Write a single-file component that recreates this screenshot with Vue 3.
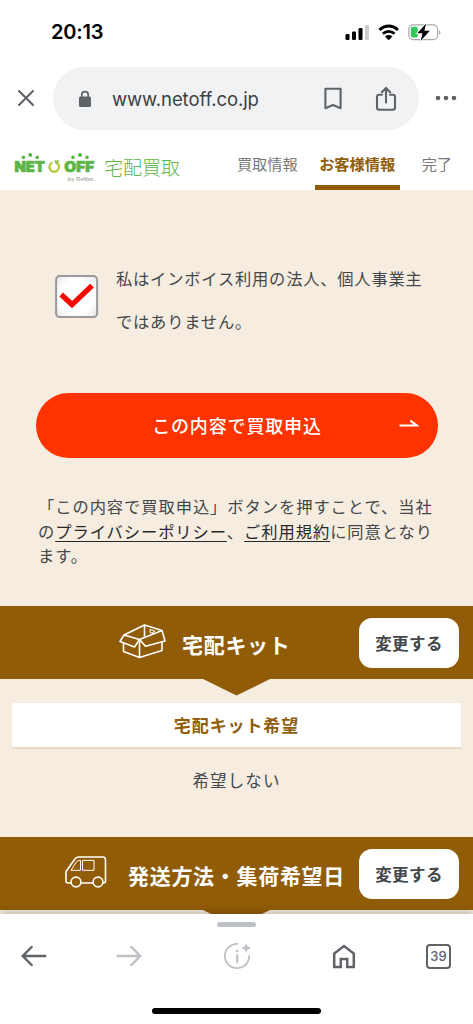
<script setup>
const terms = { privacy: 'プライバシーポリシー', rules: 'ご利用規約' }
</script>

<template>
  <div class="screen">
    <div class="status">
      <span class="time">20:13</span>
      <svg class="status-icons" width="98" height="20" viewBox="0 0 98 20">
        <rect x="1.5" y="12" width="4" height="6" rx="1.2" />
        <rect x="8" y="9.5" width="4" height="8.5" rx="1.2" />
        <rect x="14.5" y="6" width="4" height="12" rx="1.2" />
        <rect x="21" y="3" width="4" height="15" rx="1.2" fill="#ccc" />
        <g fill="none" stroke="#000" stroke-width="2.8">
          <path d="M35.4 7.9Q44.7 .2 54 7.9" />
          <path d="M38.8 11.7Q44.7 7 50.6 11.7" />
        </g>
        <path d="M41 14.4Q44.7 11.5 48.4 14.4L44.7 18.2Z" />
        <rect x="64.8" y="2.8" width="28.8" height="14.8" rx="4.5" fill="none" stroke="#aaa" stroke-width="1.2" />
        <rect x="66.8" y="4.8" width="7" height="10.8" rx="2" fill="#34c759" />
        <path d="M95 8v5q3-2.5 0-5" fill="#aaa" />
        <path d="M82 1.5L73.4 11.2H78.5L76.6 18.9L85.8 8.8H80.4Z" stroke="#fff" stroke-width="1.6" paint-order="stroke" />
      </svg>
    </div>

    <div class="browser">
      <svg width="18" height="18" viewBox="0 0 18 18" class="line close"><path d="M2 2L16 16M16 2L2 16" /></svg>
      <div class="address">
        <svg width="14" height="18" viewBox="0 0 14 18" class="lock">
          <rect x="1" y="6.5" width="12" height="10.5" rx="1.5" fill="#5f6368" />
          <path d="M3.8 7V4.8a3.2 3.2 0 0 1 6.4 0V7" fill="none" stroke="#5f6368" stroke-width="1.7" />
        </svg>
        <span class="url">www.netoff.co.jp</span>
        <svg width="20" height="24" viewBox="0 0 20 24" class="line bookmark"><path d="M2.4 1.7H17.6V21.2L10 18L2.4 21.2Z" stroke-linejoin="round" /></svg>
        <svg width="22" height="26" viewBox="0 0 22 26" class="line share"><path d="M7 8.8H4.2Q2 8.8 2 11V21.5Q2 23.7 4.2 23.7H17.8Q20 23.7 20 21.5V11Q20 8.8 17.8 8.8H15M11 16.5V2.2M6.8 6.2L11 2L15.2 6.2" /></svg>
      </div>
      <svg width="22" height="6" viewBox="0 0 22 6" class="dots"><circle cx="3" cy="3" r="2.3" /><circle cx="11" cy="3" r="2.3" /><circle cx="19" cy="3" r="2.3" /></svg>
    </div>

    <header class="site">
      <svg class="logo" width="84" height="32" viewBox="0 0 84 32">
        <g fill="#5db545">
          <circle cx="10.4" cy="5.4" r="1.8" /><circle cx="17.2" cy="3" r="2" /><circle cx="24.2" cy="5.4" r="1.8" />
          <circle cx="60" cy="5.4" r="1.8" /><circle cx="67" cy="3" r="2" /><circle cx="74" cy="5.4" r="1.8" />
          <g class="logo-word">
            <text x="1.4" y="20" textLength="30.6" lengthAdjust="spacingAndGlyphs">NET</text>
            <text x="51.2" y="20" textLength="30" lengthAdjust="spacingAndGlyphs">OFF</text>
          </g>
        </g>
        <path d="M44.5 11.4A4.8 4.8 0 1 1 39.4 10.5" fill="none" stroke="#b4cb42" stroke-width="2.4" />
        <path d="M41 8.2L46.6 8.6L43.2 12.8Z" fill="#8fc243" />
        <text x="54.5" y="28.5" class="byline" textLength="27" lengthAdjust="spacingAndGlyphs">by ReNet.</text>
      </svg>
      <span class="service">宅配買取</span>
      <nav class="steps">
        <span class="step">買取情報</span>
        <span class="step current">お客様情報</span>
        <span class="step">完了</span>
      </nav>
    </header>

    <main class="content">
      <label class="confirm">
        <svg width="44" height="44" viewBox="0 0 44 44">
          <defs><radialGradient id="box" r=".7"><stop offset=".6" stop-color="#fff" /><stop offset="1" stop-color="#e4e4e8" /></radialGradient></defs>
          <rect x="1.1" y="1.1" width="41" height="41" rx="3.5" fill="url(#box)" stroke="#999a9c" stroke-width="2" />
          <path d="M6.2 19.6L17 29.6L37 10.6" fill="none" stroke="#fa0500" stroke-width="5.4" />
        </svg>
        <span>私はインボイス利用の法人、個人事業主ではありません。</span>
      </label>
      <button class="submit">
        <span>この内容で買取申込</span>
        <svg width="20" height="10" viewBox="0 0 20 10"><path d="M.5 7.6H18L11.3 2.6" fill="none" stroke="#fff" stroke-width="2" /></svg>
      </button>
      <p class="notice">「この内容で買取申込」ボタンを押すことで、当社の<a>{{ terms.privacy }}</a>、<a>{{ terms.rules }}</a>に同意となります。</p>

      <section class="kit">
        <div class="band">
          <svg class="box-icon" width="48" height="36" viewBox="0 0 48 36" fill="none" stroke="#fff" stroke-width="1.6" stroke-linejoin="round">
            <path d="M5 12L25.5 2L43 7.5L20.5 16.5Z" /><path d="M5 12L1 18.5L15.5 24L20.5 16.5L26.5 23.3L46 18L43 7.5" />
            <path d="M4.5 20V28.5L20.5 34.5L43 27.5V19M20.5 16.5V34.5M25.5 2V13.5" />
            <path d="M31 6.5L36 8.2L33 10.2M31 6.5V9.5L35 10.5" stroke-width="1" />
          </svg>
          <h2>宅配キット</h2>
          <button class="change">変更する</button>
        </div>
        <h3>宅配キット希望</h3>
        <p class="answer">希望しない</p>
      </section>
      <section class="pickup">
        <div class="band">
          <svg class="van-icon" width="42" height="32" viewBox="0 0 42 32" fill="none" stroke="#fff" stroke-width="1.6">
            <path d="M6 27H3Q1 27 1 25V15.5L9.5 3.5Q11 1 13.5 1H38Q40.5 1 40.5 4V25Q40.5 27 38.5 27H38M28 27H16" />
            <circle cx="11" cy="26" r="4.9" /><circle cx="33" cy="26" r="4.9" />
            <path d="M6 14.3L11 6.5Q12.2 4.4 14.2 4.4H15.5V14.3ZM17.5 4.4H29V14.3H17.5Z" stroke-width="1" />
          </svg>
          <h2>発送方法・集荷希望日</h2>
          <button class="change">変更する</button>
        </div>
      </section>
    </main>

    <footer class="toolbar">
      <span class="handle"></span>
      <div class="tools">
        <svg class="dark" width="28" height="24" viewBox="0 0 28 24"><path d="M25.2 12H2.8M11.6 3L2.8 12L11.6 21" /></svg>
        <svg class="pale forward" width="28" height="24" viewBox="0 0 28 24"><path d="M2.8 12H25.2M16.4 3L25.2 12L16.4 21" /></svg>
        <svg class="pale info" width="30" height="30" viewBox="0 0 30 30">
          <path d="M15.5 2.8A12.2 12.2 0 1 0 27.2 15" stroke-width="1.8" /><path d="M15.2 14V21.2" stroke-width="2.2" />
          <circle cx="15.2" cy="10" r="1.3" fill="#bdc1c6" stroke="none" />
          <path d="M24.2 2L25.6 5.6L29.2 7L25.6 8.4L24.2 12L22.8 8.4L19.2 7L22.8 5.6Z" fill="#bdc1c6" stroke="none" />
        </svg>
        <svg class="dark home" width="24" height="26" viewBox="0 0 24 26"><path d="M2.2 24V10.6L12 3L21.8 10.6V24H15.2V16H8.8V24Z" /></svg>
        <span class="tabs">39</span>
      </div>
      <span class="home-bar"></span>
    </footer>
  </div>
</template>

<style>
body { margin: 0; }
</style>

<style scoped>
* { box-sizing: border-box; }
.screen { width: 473px; height: 1024px; overflow: hidden; display: flex; flex-direction: column; background: #fff; color: #43474a; font-family: "Noto Sans CJK JP", sans-serif; }
.status { height: 67px; padding: 2px 31px 0 51px; display: flex; align-items: center; justify-content: space-between; flex: none; }
.time { font: 600 20px/24px Inter, sans-serif; color: #000; letter-spacing: -.2px; margin-top: -5px; }
.status-icons { margin-top: -6px; }
.browser { height: 73px; padding: 0 16px 11px 17px; display: flex; align-items: center; flex: none; }
.line { fill: none; stroke: #5f6368; stroke-width: 2.1; stroke-linecap: round; }
.address { width: 366px; height: 63px; margin: 1px 0 0 18px; padding: 0 22px 0 25px; border-radius: 32px; background: #f1f2f4; display: flex; align-items: center; }
.url { font: 400 18.5px/24px Inter, sans-serif; color: #3c4043; letter-spacing: -.08px; margin-left: 20px; white-space: nowrap; width: 148px; }
.bookmark { margin-left: 63px; }
.share { margin-left: 32px; }
.dots { margin-left: auto; fill: #5f6368; }
.site { height: 50px; padding: 0 21px 0 13px; display: flex; flex: none; }
.logo { margin-top: 12px; overflow: visible; }
.logo-word { font: 900 14.5px "Inter", sans-serif; stroke: #5db545; stroke-width: .7; stroke-linejoin: round; }
.byline { font: 700 6px "Liberation Sans", sans-serif; fill: #b3b1aa; }
.service { font-size: 19px; line-height: 28px; font-weight: 300; color: #5db545; margin: 13px 0 0 7px; }
.steps { flex: 1; display: flex; justify-content: flex-end; font-size: 15.2px; white-space: nowrap; color: #77797b; }
.step { height: 50px; line-height: 46px; }
.current { margin: 0 22px 0 17px; width: 85px; text-align: center; font-weight: 700; color: #915c08; border-bottom: 5px solid #915c08; }
.content { flex: 1; min-height: 0; overflow: hidden; background: #f6ede0; }
.confirm { display: flex; gap: 17px; padding: 68px 0 0 55px; }
.confirm svg { flex: none; margin-top: 17px; }
.confirm span { width: 320px; height: 85px; margin-top: -1px; font-size: 16.3px; letter-spacing: .78px; line-height: 42.5px; }
button { border: 0; font-family: inherit; padding: 0; }
.submit { width: 402px; height: 65px; margin: 51px 0 0 36px; padding-right: 19px; border-radius: 33px; background: #ff3300; color: #fff; display: flex; align-items: center; font-size: 18px; font-weight: 500; }
.submit span { flex: 1; letter-spacing: .85px; padding: 0 0 2px 39px; }
.submit svg { margin-top: -5px; }
.notice { width: 401px; margin: 36px 0 0 38px; font-size: 16.3px; letter-spacing: .93px; line-height: 24.5px; }
.notice a { color: #26282a; text-decoration: underline; text-underline-offset: 3px; text-decoration-thickness: 1px; }
.band { position: relative; height: 73px; background: #915c08; color: #fff; display: flex; align-items: center; }
.band::after { content: ""; position: absolute; left: 202px; top: 73px; width: 69px; height: 17px; background: #915c08; clip-path: polygon(0 0, 100% 0, 50% 100%); }
.kit { margin-top: 38px; }
.box-icon { margin: -3px 0 0 119px; }
.van-icon { margin: -2px 0 0 65px; }
h2 { margin: 3px 0 0; font-size: 21px; line-height: 30px; font-weight: 700; letter-spacing: .7px; white-space: nowrap; }
.kit h2 { margin-left: 15px; }
.pickup h2 { margin-left: 21px; }
.change { width: 100px; height: 50px; margin: 1px 14px 0 auto; padding-top: 1px; border-radius: 13px; background: #fff; color: #43474a; font-size: 16.5px; font-weight: 700; letter-spacing: .4px; }
h3 { width: 449px; height: 44px; margin: 24px auto 0; background: #fff; color: #915c08; text-align: center; font-size: 17px; line-height: 43px; font-weight: 700; letter-spacing: .9px; box-shadow: 0 2px 1px #ead9ca; }
.answer { margin: 0; height: 90px; text-align: center; font-size: 16.5px; line-height: 67px; letter-spacing: 1.1px; }
.toolbar { position: relative; height: 110px; flex: none; display: flex; flex-direction: column; align-items: center; background: #fff; box-shadow: 0 -2px 7px rgba(0,0,0,.23); }
.handle { width: 39px; height: 5px; margin-top: 8px; border-radius: 3px; background: #bdc1c6; }
.tools { width: 433px; margin-top: 14px; height: 30px; display: flex; align-items: center; }
.tools svg { fill: none; stroke-width: 2.5; stroke-linecap: round; flex: none; }
.dark { stroke: #5f6368; }
.pale { stroke: #bdc1c6; }
.forward { margin-left: 67px; }
.info { margin-left: 79px; }
.tools .home { stroke-linecap: butt; margin-left: 80px; }
.tabs { width: 25px; height: 25px; margin-left: 70px; border: 2.2px solid #5f6368; border-radius: 4px; font: 500 13px/21px Inter, sans-serif; text-align: center; color: #5f6368; }
.home-bar { width: 169px; height: 6px; margin-top: 37px; border-radius: 3px; background: #000; }
</style>
